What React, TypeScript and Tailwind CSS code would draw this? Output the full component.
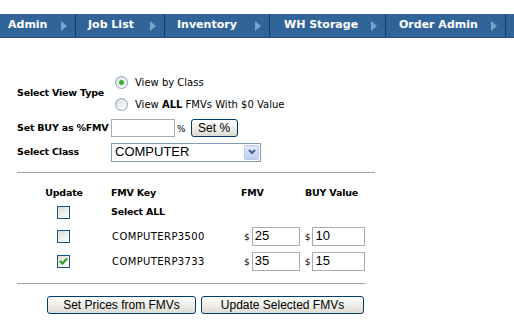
import React, { useState } from 'react';

const navItems = [
  { label: 'Admin', w: 'w-[75px]', pl: 'pl-[8px]' },
  { label: 'Job List', w: 'w-[88px]', pl: 'pl-[12px]' },
  { label: 'Inventory', w: 'w-[104px]', pl: 'pl-[12px]' },
  { label: 'WH Storage', w: 'w-[115px]', pl: 'pl-[14px]' },
  { label: 'Order Admin', w: 'w-[119px]', pl: 'pl-[13px]' },
];

function Arrow() {
  return (
    <svg width="6" height="10" viewBox="0 0 6 10" className="shrink-0">
      <path d="M0 0 L6 5 L0 10 Z" fill="#7aa3cc" />
    </svg>
  );
}

function Radio({ checked }: { checked?: boolean }) {
  return (
    <span className="relative inline-flex h-[13px] w-[13px] shrink-0 items-center justify-center rounded-full border border-[#8aa0b8] bg-gradient-to-br from-[#d8dde2] to-white">
      {checked && <span className="h-[5px] w-[5px] rounded-full bg-[#3cb02f]" />}
    </span>
  );
}

function Check({ checked }: { checked?: boolean }) {
  return (
    <span className="inline-flex h-[13px] w-[13px] items-center justify-center border border-[#1c5180] bg-gradient-to-br from-[#dcdcd6] to-white">
      {checked && (
        <svg width="9" height="9" viewBox="0 0 9 9">
          <path d="M1 4 L3.5 6.5 L8 1.5" stroke="#21a121" strokeWidth="2" fill="none" />
        </svg>
      )}
    </span>
  );
}

function XpButton({ children, className }: { children: React.ReactNode; className: string }) {
  return (
    <button
      className={`h-[18px] rounded-[3px] border border-[#003c74] bg-gradient-to-b from-white to-[#dedbd2] text-[12px] leading-none text-black ${className}`}
      style={{ fontFamily: '"Liberation Sans", Arial, sans-serif' }}
    >
      {children}
    </button>
  );
}

export default function App() {
  const [buy, setBuy] = useState('15');
  const bold = 'whitespace-nowrap text-[9.5px] font-bold tracking-[-0.2px] text-black';
  const verdana = { fontFamily: '"DejaVu Sans", Verdana, sans-serif' };
  const arial = { fontFamily: '"Liberation Sans", Arial, sans-serif' };

  return (
    <div className="h-[324px] w-[514px] overflow-hidden bg-white" style={verdana}>
      <div className="h-[14px]" />
      <div className="flex h-[24px] border-b border-[#24507c] bg-[#31659a]">
        {navItems.map((n) => (
          <React.Fragment key={n.label}>
            <div className={`flex ${n.w} shrink-0 items-center justify-between pr-[8px] ${n.pl}`}>
              <span className="text-[11px] font-bold text-white">{n.label}</span>
              <Arrow />
            </div>
            <div className="w-px shrink-0 bg-[#1b3c5e]" />
          </React.Fragment>
        ))}
        <div className="flex-1" />
      </div>

      <div className="pl-[17px] pt-[36px]">
        <div className="flex">
          <div className={`flex w-[94px] items-center ${bold}`}>Select View Type</div>
          <div className="flex flex-col gap-[6px] pl-[4px]">
            <label className="flex h-[16px] items-center gap-[7px] whitespace-nowrap text-[10px]">
              <Radio checked />
              <span>View by Class</span>
            </label>
            <label className="flex h-[16px] items-center gap-[7px] whitespace-nowrap text-[10px]">
              <Radio />
              <span>
                View <b>ALL</b> FMVs With $0 Value
              </span>
            </label>
          </div>
        </div>

        <div className="mt-[6px] flex h-[20px] items-center">
          <div className={`w-[94px] ${bold}`}>Set BUY as %FMV</div>
          <input className="h-[18px] w-[64px] border border-[#a5acb2] outline-none" />
          <span className="ml-[2px] mt-[4px] text-[9px]">%</span>
          <XpButton className="ml-[5px] w-[47px]">Set %</XpButton>
        </div>

        <div className="mt-[4px] flex h-[20px] items-center">
          <div className={`w-[94px] ${bold}`}>Select Class</div>
          <div className="flex h-[19px] w-[150px] items-center justify-between border border-[#7f9db9] bg-white pl-[3px] pr-px">
            <span className="text-[13px]" style={arial}>COMPUTER</span>
            <span className="flex h-[15px] w-[15px] items-center justify-center rounded-[2px] border border-[#b9c9ef] bg-gradient-to-b from-[#e3ebfc] to-[#bccff3]">
              <svg width="8" height="6" viewBox="0 0 8 6">
                <path d="M1 1 L4 4 L7 1" stroke="#4d6185" strokeWidth="2" fill="none" />
              </svg>
            </span>
          </div>
        </div>

        <div className="mt-[10px] h-[2px] w-[358px] border-t border-[#a0a0a0] border-b-white" />

        <div className="mt-[11px] flex h-[16px] items-center">
          <div className={`w-[94px] text-center ${bold}`}>Update</div>
          <div className={`w-[130px] ${bold}`}>FMV Key</div>
          <div className={`w-[64px] ${bold}`}>FMV</div>
          <div className={`${bold}`}>BUY Value</div>
        </div>

        <div className="mt-[3px] flex h-[16px] items-center">
          <div className="flex w-[94px] justify-center pr-[2px]"><Check /></div>
          <div className={bold}>Select ALL</div>
        </div>

        {[
          { key: 'COMPUTERP3500', fmv: '25', buy: '10', checked: false },
          { key: 'COMPUTERP3733', fmv: '35', buy: buy, checked: true },
        ].map((r, i) => (
          <div key={r.key} className={`flex h-[20px] items-center ${i === 0 ? 'mt-[6px]' : 'mt-[5px]'}`}>
            <div className="flex w-[94px] justify-center pr-[2px]"><Check checked={r.checked} /></div>
            <div className="w-[133px] pl-px text-[10px] tracking-[0.4px]">{r.key}</div>
            <span className="mt-[4px] text-[9px]">$</span>
            <input
              readOnly
              value={r.fmv}
              className="ml-[2px] h-[19px] w-[48px] border border-[#a5acb2] pl-[2px] text-[13px] outline-none"
              style={arial}
            />
            <span className="ml-[5px] mt-[4px] text-[9px]">$</span>
            <input
              value={r.buy}
              onChange={(e) => i === 1 && setBuy(e.target.value)}
              readOnly={i === 0}
              className="ml-[2px] h-[19px] w-[53px] border border-[#a5acb2] pl-[2px] text-[13px] outline-none"
              style={arial}
            />
          </div>
        ))}

        <div className="mt-[12px] h-[2px] w-[348px] border-t border-[#a0a0a0] border-b-white" />

        <div className="mt-[11px] flex gap-[5px] pl-[30px]">
          <XpButton className="w-[149px]">Set Prices from FMVs</XpButton>
          <XpButton className="w-[163px]">Update Selected FMVs</XpButton>
        </div>
      </div>
    </div>
  );
}
